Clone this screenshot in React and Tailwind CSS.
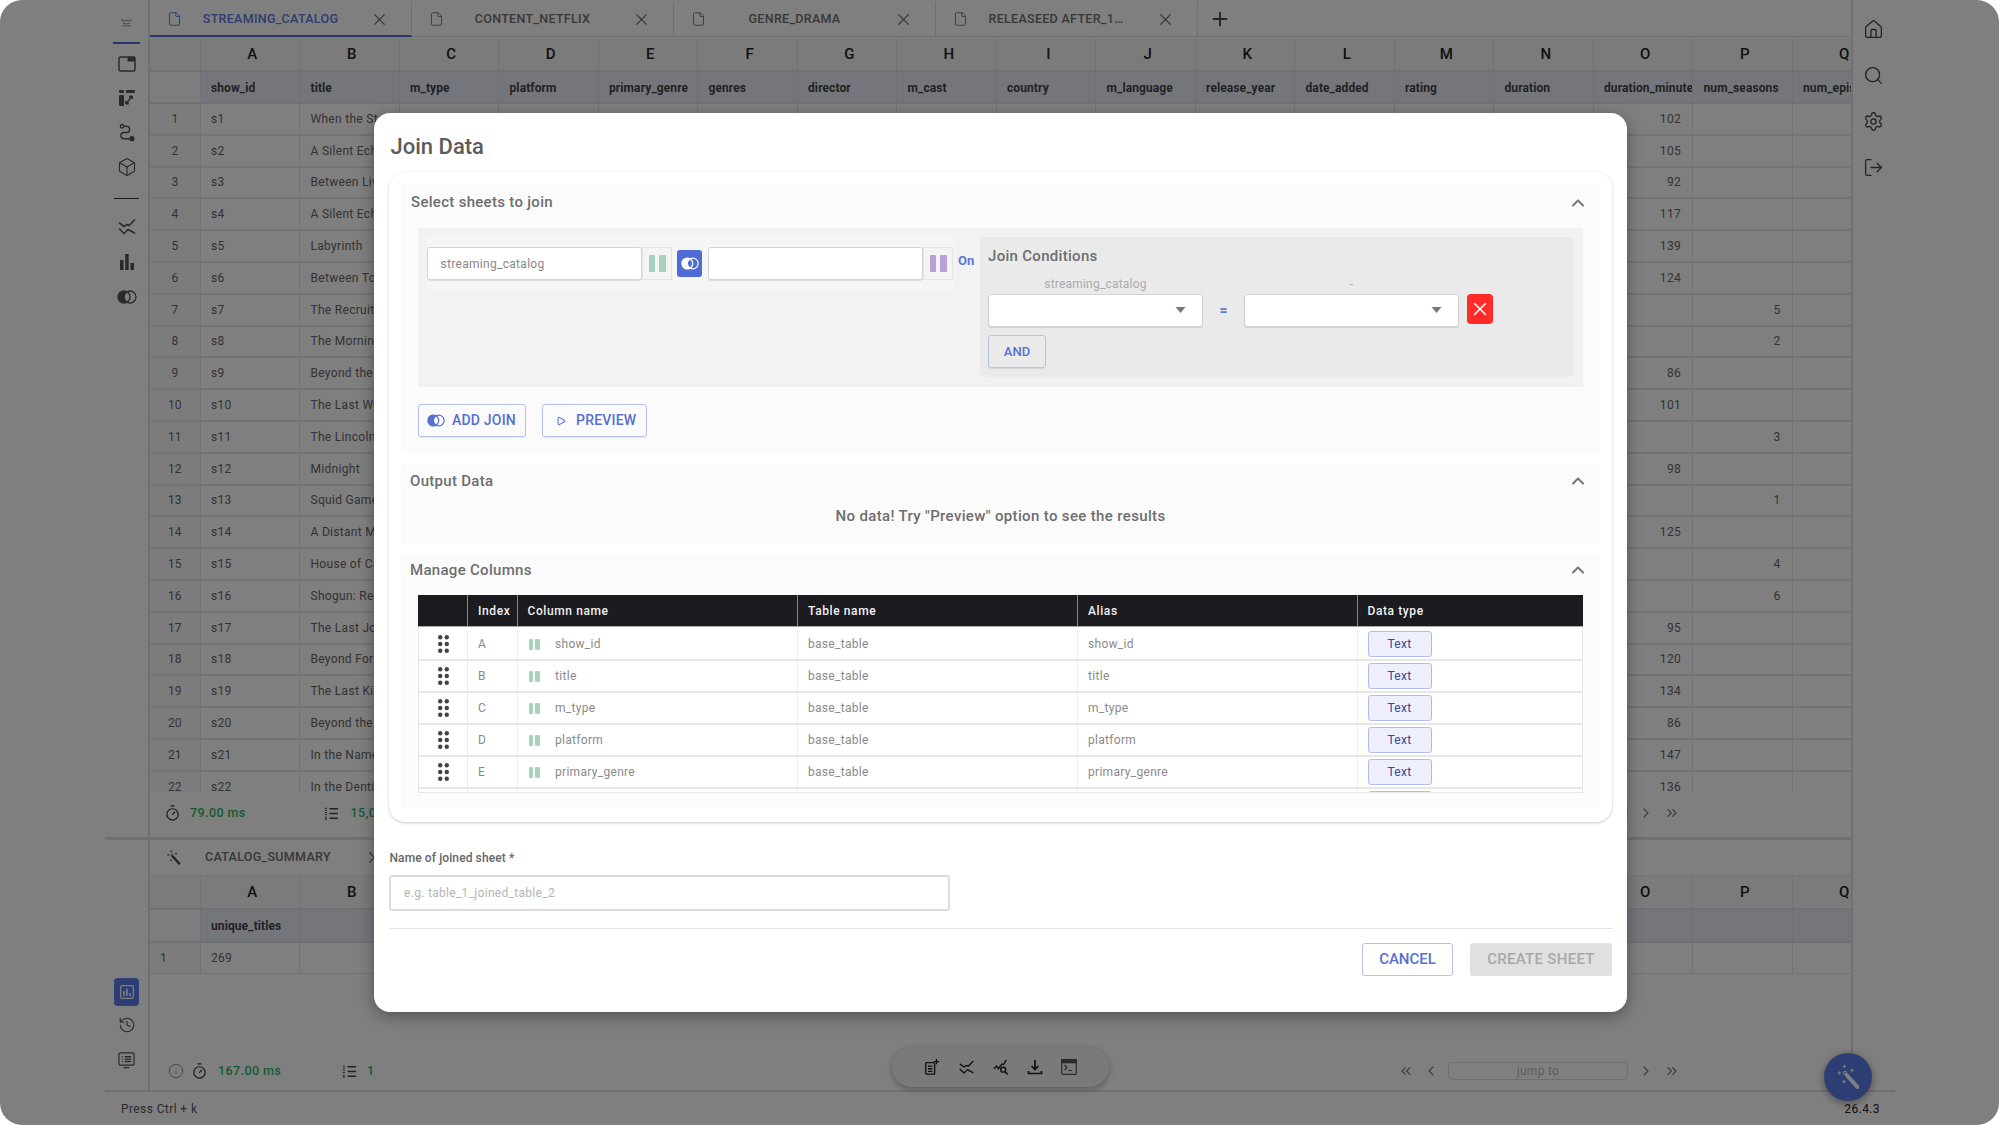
import React from "react";
import { File, X, Plus, Box, Timer, Info, History, House, Search, Settings, LogOut, ChevronUp, ChevronsLeft, ChevronsRight, ChevronLeft, ChevronRight, Play } from "lucide-react";

const LETTERS = "ABCDEFGHIJKLMNOPQ".split("");
const HEADERS = ["show_id","title","m_type","platform","primary_genre","genres","director","m_cast","country","m_language","release_year","date_added","rating","duration","duration_minutes","num_seasons","num_episodes"];
const ROWS = [
  ["When the Stars Fall","102",""],["A Silent Echo","105",""],["Between Lives","92",""],["A Silent Echo","117",""],["Labyrinth","139",""],["Between Tomorrow","124",""],
  ["The Recruit","","5"],["The Morning Show","","2"],["Beyond the Sea","86",""],["The Last Word","101",""],["The Lincoln Lawyer","","3"],["Midnight","98",""],
  ["Squid Game","","1"],["A Distant Memory","125",""],["House of Cards","","4"],["Shogun: Return","","6"],["The Last Journey","95",""],["Beyond Forever","120",""],
  ["The Last King","134",""],["Beyond the Line","86",""],["In the Name","147",""],["In the Dentist","136",""],
];
const MANAGE = [["A","show_id"],["B","title"],["C","m_type"],["D","platform"],["E","primary_genre"],["F","genres"]];

function Venn({ className = "" }) {
  return (
    <svg viewBox="0 0 20 14" className={className} fill="none" stroke="currentColor" strokeWidth="1.300">
      <path d="M10 1.800A6 6 0 1 0 10 12.200A6 6 0 0 1 10 1.800Z" fill="currentColor" />
      <path d="M10 1.800A6 6 0 0 1 10 12.200" />
      <circle cx="13" cy="7" r="6" />
    </svg>
  );
}
function Waves({ className = "" }) {
  return (
    <svg viewBox="0 0 20 20" className={className} fill="none" stroke="currentColor" strokeWidth="1.600" strokeLinejoin="round" strokeLinecap="round">
      <path d="M2.500 6L7 9.500l3-2 2 1L17.500 3" />
      <path d="M2.500 12L7 16.500l4-4 6.500 3.500" />
    </svg>
  );
}
function ListIcon({ className = "" }) {
  return (
    <svg viewBox="0 0 16 16" className={className} fill="none" stroke="currentColor" strokeWidth="1.500">
      <path d="M6 3h9M6 8h9M6 13h9" />
      <path d="M1 2.500h2M1 4.500h2M1 7h2M1 9h2M1 12h2M1 14h2" strokeWidth="1.100" />
    </svg>
  );
}
function Wand({ className = "" }) {
  return (
    <svg viewBox="0 0 24 24" className={className} fill="none" stroke="currentColor">
      <path d="M11 10.500L20 20.500" strokeWidth="3.400" strokeLinecap="round" />
      <circle cx="9.500" cy="8.500" r="1.300" strokeWidth="1" />
      <path d="M9 1.500v3M7.500 3h3M3 8.500h3M4.500 7v3M15.500 5v3M14 6.500h3M8.500 14.500v3M7 16h3" strokeWidth="0.900" />
    </svg>
  );
}
function Caret() {
  return (
    <svg viewBox="0 0 10 6" className="w-[11px] h-[6px] fill-[#777]">
      <polygon points="0,0 10,0 5,6" />
    </svg>
  );
}
function Bars({ className = "", bar = "" }) {
  return (
    <span className={`flex justify-between ${className}`}>
      <span className={`h-full w-[38%] rounded-[1px] ${bar}`} />
      <span className={`h-full w-[38%] rounded-[1px] ${bar}`} />
    </span>
  );
}
function Pager() {
  return (
    <div className="flex items-center text-[#777]">
      <ChevronsLeft className="w-[16px] h-[16px] mr-[9px]" strokeWidth={1.700} />
      <ChevronLeft className="w-[16px] h-[16px]" strokeWidth={1.700} />
      <div className="w-[180px] h-[18px] ml-[9px] mr-[10px] rounded-[5px] border border-[#dcdcdc] flex items-center justify-center text-[12px] tracking-[0.3px] text-[#bbb]">jump to</div>
      <ChevronRight className="w-[16px] h-[16px] mr-[10px]" strokeWidth={1.700} />
      <ChevronsRight className="w-[16px] h-[16px]" strokeWidth={1.700} />
    </div>
  );
}
function Tab({ name, active }) {
  return (
    <div className={`w-[262px] h-[35px] flex items-center border-r border-[#dedede] shrink-0 ${active ? "border-b-2 border-b-[#4f6bd6] pt-[2px]" : ""}`}>
      <File className={`w-[15px] h-[16px] ml-[17px] ${active ? "text-[#5a7ae0]" : "text-[#777]"}`} strokeWidth={1.500} />
      <span className={`ml-[20.500px] w-[136px] text-center text-[12.500px] font-medium tracking-[0.3px] truncate ${active ? "text-[#5a7ae0]" : "text-[#707070]"}`}>{name}</span>
      <X className="w-[19px] h-[19px] text-[#777] ml-[31px]" strokeWidth={1.500} />
    </div>
  );
}
function LetterRow() {
  return (
    <div className="flex h-[34px] bg-[#f7f7f7] border-b-2 border-[#e2e2e2] shrink-0">
      <div className="w-[50.500px] shrink-0 border-r border-[#e4e4e4]" />
      {LETTERS.map((l) => (
        <div key={l} className="w-[99.500px] shrink-0 border-r border-[#e4e4e4] flex items-center justify-center pl-[5px] text-[15px] font-medium text-[#222]">{l}</div>
      ))}
    </div>
  );
}
function Cell({ children, right }) {
  return (
    <div className={`w-[99.500px] shrink-0 h-full border-r border-[#e6e6e6] flex items-center overflow-hidden whitespace-nowrap text-[12px] tracking-[0.3px] text-[#666] ${right ? "justify-end pr-[11px]" : "pl-[10.500px]"}`}>{children}</div>
  );
}
function HeadCell({ children }) {
  return (
    <div className="w-[99.500px] shrink-0 h-full border-r border-[#e0e3ec] flex items-center overflow-hidden whitespace-nowrap pl-[10.500px] pt-[1.500px] text-[12px] font-bold tracking-[0.1px] text-[#444]">{children}</div>
  );
}

function SectionHead({ title, h }) {
  return (
    <div className={`flex items-center justify-between pr-[12px] ${h}`}>
      <span className="text-[15px] font-medium tracking-[0.3px] text-[#6e6e6e]">{title}</span>
      <ChevronUp className="w-[20px] h-[20px] text-[#777]" strokeWidth={2.400} />
    </div>
  );
}
function SheetInput({ value }) {
  return (
    <div className="w-[215px] h-[33px] bg-white rounded-[3px] border border-[#d4d4d4] shadow-[0_1px_1px_rgba(0,0,0,0.1)] flex items-center pl-[12.500px] text-[12px] tracking-[0.3px] text-[#888] shrink-0">{value}</div>
  );
}
function BarBox({ bar }) {
  return (
    <div className="w-[30px] h-[33px] border border-[#e4e4e4] bg-[#f4f4f4] flex items-center justify-center shrink-0">
      <Bars className="w-[17px] h-[17px]" bar={bar} />
    </div>
  );
}
function SelectBox() {
  return (
    <div className="w-[215px] h-[33px] bg-white rounded-[3px] border border-[#d4d4d4] shadow-[0_1px_1px_rgba(0,0,0,0.1)] flex items-center justify-end pr-[16px] shrink-0">
      <Caret />
    </div>
  );
}

function Modal() {
  return (
    <div className="absolute left-[374px] top-[113px] w-[1253px] h-[899px] bg-white rounded-[16px] shadow-[0_4px_16px_rgba(0,0,0,0.35)] px-[15px] pt-[21px] font-['Roboto',sans-serif]">
      <h2 className="h-[26px] leading-[26px] text-[22px] font-medium text-[#5c5c5c] pl-[1.500px]">Join Data</h2>

      <div className="mt-[12px] h-[650px] rounded-[16px] shadow-[0_1px_3px_rgba(0,0,0,0.22)] px-[12px] pt-[13px]">
        <div className="h-[268px] bg-[#fbfbfb]">
          <SectionHead title="Select sheets to join" h="h-[43px] pb-[8px] pl-[10px]" />
          <div className="mx-[17px] h-[159px] bg-[#f2f2f2] flex items-start pl-[8px] pt-[8px]">
            <div className="w-[528px] h-[55px] bg-[#f5f5f5] rounded-[6px] flex items-start pl-[1px] pt-[11px] shrink-0">
              <SheetInput value="streaming_catalog" />
              <BarBox bar="bg-[#a5d3bd]" />
              <div className="w-[25px] h-[27px] ml-[5px] mt-[3px] rounded-[3px] bg-[#4f6bd6] text-white flex items-center justify-center shrink-0">
                <Venn className="w-[18px] h-[13px]" />
              </div>
              <div className="ml-[6px]"><SheetInput value="" /></div>
              <BarBox bar="bg-[#b9a0d8]" />
            </div>
            <span className="ml-[4px] w-[22px] mt-[15px] text-[13px] font-bold text-[#5a78d8] shrink-0">On</span>
            <div className="w-[594px] h-[140px] mt-[1px] bg-[#eaeaea] rounded-[6px] pl-[8px] pt-[10px] shrink-0">
              <div className="h-[18px] leading-[18px] text-[15px] font-medium tracking-[0.3px] text-[#6e6e6e]">Join Conditions</div>
              <div className="flex mt-[10px] h-[18.500px] text-[12px] tracking-[0.2px] text-[#aaa]">
                <span className="w-[215px] text-center">streaming_catalog</span>
                <span className="w-[41px]" />
                <span className="w-[215px] text-center">-</span>
              </div>
              <div className="flex items-start">
                <SelectBox />
                <span className="w-[41px] h-[33px] flex items-center justify-center text-[14px] font-bold text-[#5a78d8]">=</span>
                <SelectBox />
                <div className="ml-[8px] w-[26px] h-[30px] rounded-[4px] bg-[#ff2a2a] flex items-center justify-center text-white">
                  <X className="w-[22px] h-[22px]" strokeWidth={1.600} />
                </div>
              </div>
              <button className="mt-[8.500px] w-[58px] h-[33px] rounded-[3px] border border-[#b4c3ec] shadow-[0_1px_1px_rgba(0,0,0,0.08)] text-[13px] font-medium text-[#5570d2]">AND</button>
            </div>
          </div>
          <div className="flex gap-[16px] mx-[17px] mt-[17px]">
            <button className="w-[108px] h-[33px] rounded-[3px] border border-[#b4c3ec] shadow-[0_1px_1px_rgba(0,0,0,0.08)] flex items-center pl-[8px] text-[14px] font-medium tracking-[0.2px] text-[#5570d2]">
              <Venn className="w-[18px] h-[13px]" />
              <span className="ml-[7px]">ADD JOIN</span>
            </button>
            <button className="w-[105px] h-[33px] rounded-[3px] border border-[#b4c3ec] shadow-[0_1px_1px_rgba(0,0,0,0.08)] flex items-center pl-[13px] text-[14px] font-medium tracking-[0.2px] text-[#5570d2]">
              <Play className="w-[10px] h-[10px]" strokeWidth={2.500} />
              <span className="ml-[10px]">PREVIEW</span>
            </button>
          </div>
        </div>

        <div className="mt-[12px] h-[78px] bg-[#fbfbfb]">
          <SectionHead title="Output Data" h="h-[32px] pl-[9px]" />
          <div className="h-[38px] flex items-center justify-center text-[15px] font-medium tracking-[0.35px] text-[#6e6e6e]">No data! Try "Preview" option to see the results</div>
        </div>

        <div className="mt-[11px] h-[254px] bg-[#fbfbfb]">
          <SectionHead title="Manage Columns" h="h-[41px] pb-[9px] pl-[9px]" />
          <div className="mx-[17px] h-[198px] overflow-hidden border-b border-[#e6e6e6]">
            <div className="flex h-[32px] bg-[#1b1b20] text-[12px] font-medium tracking-[0.6px] text-[#f0f0f0] border-b border-[#aaa]">
              <div className="w-[50px] border-r border-[#888]" />
              <div className="w-[49.500px] pl-[10px] flex items-center border-r border-[#888]">Index</div>
              <div className="w-[280.500px] pl-[10px] flex items-center border-r border-[#888]">Column name</div>
              <div className="w-[280px] pl-[10px] flex items-center border-r border-[#888]">Table name</div>
              <div className="w-[279.500px] pl-[10px] flex items-center border-r border-[#888]">Alias</div>
              <div className="w-[224px] pl-[10px] flex items-center">Data type</div>
            </div>
            <div className="h-[2.500px] bg-white border-x border-[#e6e6e6]" />
            {MANAGE.map(([idx, name]) => (
              <div key={idx} className="flex h-[31.900px] bg-white border-b-2 border-x border-[#e6e6e6] text-[12px] tracking-[0.3px] text-[#8a8a8a]">
                <div className="w-[49px] flex items-center justify-center border-r border-[#ececec]">
                  <svg viewBox="0 0 11 18" className="w-[11px] h-[18px] fill-[#444]">
                    {[2.200, 8.800].map((cx) => [2.300, 9, 15.700].map((cy) => <circle key={`${cx}-${cy}`} cx={cx} cy={cy} r="2.200" />))}
                  </svg>
                </div>
                <div className="w-[49.500px] pl-[10px] flex items-center border-r border-[#ececec]">{idx}</div>
                <div className="w-[280.500px] pl-[11px] flex items-center border-r border-[#ececec]">
                  <Bars className="w-[11px] h-[11px]" bar="bg-[#a5d3bd]" />
                  <span className="ml-[15.500px]">{name}</span>
                </div>
                <div className="w-[280px] pl-[10px] flex items-center border-r border-[#ececec]">base_table</div>
                <div className="w-[279.500px] pl-[10px] flex items-center border-r border-[#ececec]">{name}</div>
                <div className="w-[222px] pl-[10px] flex items-center">
                  <div className="w-[64px] h-[26px] rounded-[3px] bg-[#eef0fd] border border-[#b0bcf0] flex items-center justify-center text-[#34488c]">Text</div>
                </div>
              </div>
            ))}
          </div>
        </div>
      </div>

      <div className="mt-[28px] h-[16px] leading-[16px] pl-[0.500px] text-[12px] font-medium tracking-[0.1px] text-[#666]">Name of joined sheet *</div>
      <div className="mt-[9px] w-[561px] h-[36px] rounded-[3px] border-2 border-[#dcdcdc] flex items-center pl-[13px] text-[12px] tracking-[0.3px] text-[#b4b4b4]">e.g. table_1_joined_table_2</div>
      <div className="mt-[17px] h-[1px] bg-[#e4e4e4]" />
      <div className="mt-[13.500px] flex justify-end gap-[17px]">
        <button className="w-[91px] h-[33px] rounded-[3px] border border-[#b4c3ec] text-[15px] font-medium text-[#5570d2]">CANCEL</button>
        <button className="w-[142px] h-[33px] rounded-[3px] bg-[#e0e0e0] text-[15px] font-medium tracking-[0.3px] text-[#a8a8a8]">CREATE SHEET</button>
      </div>
    </div>
  );
}

function RailIcon({ children, className = "" }) {
  return <div className={`h-[20px] flex items-center justify-center text-[#555] ${className}`}>{children}</div>;
}

export default function App() {
  return (
    <div className="relative w-[1999px] h-[1125px] overflow-hidden bg-white font-['Roboto',sans-serif]">
      <div className="h-full pl-[105px] pr-[104px] flex flex-col">
        <div className="h-[1092px] flex border-b-2 border-[#e0e0e0] shrink-0">
          {/* left rail */}
          <div className="w-[45px] shrink-0 border-r-2 border-[#e0e0e0] flex flex-col">
            <div className="h-[840px] border-b-[3px] border-[#e0e0e0] flex flex-col">
              <div className="mt-[16px] h-[14px] flex items-center justify-center">
                <svg viewBox="0 0 14 10" className="w-[13px] h-[10px]" fill="none" stroke="#9aa5c4" strokeWidth="1.200">
                  <path d="M1 1l3 2 3-1 3 1 3-2M3 5l4 1 4-1M2 8h10" />
                </svg>
              </div>
              <div className="mt-[12px] mx-[8px] h-[1.500px] bg-[#4f6bd6]" />
              <RailIcon className="mt-[10px]">
                <svg viewBox="0 0 18 16" className="w-[18px] h-[16px]" fill="none" stroke="currentColor" strokeWidth="1.500">
                  <rect x="1" y="1" width="16" height="14" rx="1.500" />
                  <rect x="9.500" y="1" width="7.500" height="4.500" fill="currentColor" stroke="none" />
                </svg>
              </RailIcon>
              <RailIcon className="mt-[14px]">
                <svg viewBox="0 0 18 18" className="w-[18px] h-[18px]" fill="currentColor">
                  <rect x="1" y="1" width="5" height="3" rx="1" />
                  <rect x="8" y="1" width="9" height="3" rx="1" />
                  <rect x="1" y="6" width="5" height="11" rx="1" />
                  <path d="M14 7l-6 8M14 7l-3 .5M14 7l.5 3M8 15l3-.5M8 15l-.5-3" fill="none" stroke="currentColor" strokeWidth="1.500" />
                </svg>
              </RailIcon>
              <RailIcon className="mt-[15px]">
                <svg viewBox="0 0 18 20" className="w-[16px] h-[19px]" fill="none" stroke="currentColor" strokeWidth="1.500">
                  <circle cx="3.500" cy="3" r="2" />
                  <path d="M5.500 3h3a3.500 3.500 0 0 1 0 7h-3a3.500 3.500 0 0 0 0 7h6" />
                  <circle cx="14.500" cy="17" r="2.200" fill="currentColor" />
                </svg>
              </RailIcon>
              <RailIcon className="mt-[14px]"><Box className="w-[20px] h-[20px]" strokeWidth={1.400} /></RailIcon>
              <div className="mt-[21px] mx-[9px] h-[1.500px] bg-[#333]" />
              <RailIcon className="mt-[18px]"><Waves className="w-[20px] h-[20px]" /></RailIcon>
              <RailIcon className="mt-[15px]">
                <svg viewBox="0 0 14 16" className="w-[14px] h-[16px]" fill="currentColor">
                  <rect x="0" y="6" width="3.500" height="10" />
                  <rect x="5.200" y="0" width="3.500" height="16" />
                  <rect x="10.500" y="9" width="3.500" height="7" />
                </svg>
              </RailIcon>
              <RailIcon className="mt-[15px]"><Venn className="w-[20px] h-[14px]" /></RailIcon>
            </div>
            <div className="flex-1 flex flex-col items-center justify-end pb-[20px]">
              <div className="w-[25px] h-[28px] rounded-[4px] bg-[#5a7ce8] flex items-center justify-center text-white">
                <svg viewBox="0 0 14 14" className="w-[14px] h-[14px]" fill="none" stroke="currentColor" strokeWidth="1.200">
                  <rect x="0.700" y="0.700" width="12.600" height="12.600" rx="1" />
                  <path d="M4 11V6M7 11V3.500M10 11V8" strokeWidth="1.600" />
                </svg>
              </div>
              <RailIcon className="mt-[9px]"><History className="w-[18px] h-[18px]" strokeWidth={1.500} /></RailIcon>
              <RailIcon className="mt-[15px]">
                <svg viewBox="0 0 18 18" className="w-[17px] h-[17px]" fill="none" stroke="currentColor" strokeWidth="1.300">
                  <rect x="1" y="1" width="16" height="13" rx="1.500" />
                  <path d="M4 5h1M4 7.500h1M4 10h1M7 5h7M7 7.500h7M7 10h7M6 16.500h6" strokeWidth="1.500" />
                </svg>
              </RailIcon>
            </div>
          </div>

          {/* center */}
          <div className="w-[1701px] shrink-0 flex flex-col">
            <div className="h-[840px] border-b-[3px] border-[#e0e0e0] flex flex-col overflow-hidden">
              <div className="mt-[2px] h-[35px] flex items-center shrink-0 border-b border-[#e0e0e0]">
                <Tab name="STREAMING_CATALOG" active />
                <Tab name="CONTENT_NETFLIX" />
                <Tab name="GENRE_DRAMA" />
                <Tab name="RELEASEED AFTER_1..." />
                <Plus className="w-[22px] h-[22px] ml-[11px] text-[#444]" strokeWidth={2} />
              </div>
              <div className="h-[755px] overflow-hidden shrink-0 pt-[1px]">
                <LetterRow />
                <div className="flex h-[32px] bg-[#e9edf9] border-b-2 border-[#dfe2ea]">
                  <div className="w-[50.500px] shrink-0 bg-[#fafafa] border-r border-[#e4e4e4]" />
                  {HEADERS.map((h) => <HeadCell key={h}>{h}</HeadCell>)}
                </div>
                {ROWS.map((r, i) => (
                  <div key={i} className="flex h-[31.800px] border-b-2 border-[#e6e6e6]">
                    <div className="w-[50.500px] shrink-0 bg-[#f9f9f9] border-r border-[#e4e4e4] flex items-center justify-center text-[12px] text-[#666]">{i + 1}</div>
                    <Cell>{`s${i + 1}`}</Cell>
                    <Cell>{r[0]}</Cell>
                    {Array.from({ length: 12 }).map((_, k) => <Cell key={k} />)}
                    <Cell right>{r[1]}</Cell>
                    <Cell right>{r[2]}</Cell>
                    <Cell />
                  </div>
                ))}
              </div>
              <div className="flex-1 flex items-center pl-[14px] pr-[171px] pb-[3px]">
                <Timer className="w-[17px] h-[18px] text-[#333]" strokeWidth={1.700} />
                <span className="ml-[9px] w-[133.500px] text-[12.500px] font-medium tracking-[0.4px] text-[#28b85c]">79.00 ms</span>
                <ListIcon className="w-[15px] h-[15px] text-[#444]" />
                <span className="ml-[12px] text-[12.500px] font-medium tracking-[0.4px] text-[#28b85c]">15,000</span>
                <div className="ml-auto"><Pager /></div>
              </div>
            </div>

            <div className="flex-1 flex flex-col overflow-hidden">
              <div className="h-[36px] flex items-center shrink-0 border-b border-[#e8e8e8]">
                <div className="w-[262px] flex items-center">
                  <Wand className="w-[17px] h-[17px] ml-[15px] text-[#444]" />
                  <span className="ml-[23px] w-[132px] text-[12.500px] font-medium tracking-[0.3px] text-[#707070]">CATALOG_SUMMARY</span>
                  <X className="w-[19px] h-[19px] text-[#777] ml-[28px]" strokeWidth={1.500} />
                </div>
              </div>
              <LetterRow />
              <div className="flex h-[33px] bg-[#e9edf9] border-b-2 border-[#dfe2ea] shrink-0">
                <div className="w-[50.500px] shrink-0 bg-[#fafafa] border-r border-[#e4e4e4]" />
                <HeadCell>unique_titles</HeadCell>
                {Array.from({ length: 16 }).map((_, k) => <HeadCell key={k} />)}
              </div>
              <div className="flex h-[31px] border-b border-[#e4e4e4] shrink-0">
                <div className="w-[50.500px] shrink-0 bg-[#f9f9f9] border-r border-[#e4e4e4] flex items-center pl-[10px] text-[12px] text-[#666]">1</div>
                <Cell>269</Cell>
                {Array.from({ length: 16 }).map((_, k) => <Cell key={k} />)}
              </div>
              <div className="mt-auto h-[38px] flex items-center pl-[18px] pr-[171px] shrink-0">
                <Info className="w-[16px] h-[16px] text-[#888]" strokeWidth={1.400} />
                <Timer className="w-[17px] h-[18px] ml-[7px] text-[#333]" strokeWidth={1.700} />
                <span className="ml-[10px] w-[124px] text-[12.500px] font-medium tracking-[0.4px] text-[#28b85c]">167.00 ms</span>
                <ListIcon className="w-[15px] h-[15px] text-[#444]" />
                <span className="ml-[10px] text-[12.500px] font-medium text-[#28b85c]">1</span>
                <div className="ml-auto"><Pager /></div>
              </div>
            </div>
          </div>

          {/* right rail */}
          <div className="flex-1 border-l-2 border-[#e0e0e0] flex flex-col items-center pt-[19px] pr-[2px] gap-[25px] text-[#444]">
            <House className="w-[21px] h-[21px]" strokeWidth={1.500} />
            <Search className="w-[21px] h-[21px]" strokeWidth={1.500} />
            <Settings className="w-[21px] h-[21px]" strokeWidth={1.500} />
            <LogOut className="w-[21px] h-[21px]" strokeWidth={1.500} />
          </div>
        </div>
        <div className="flex-1 flex items-center justify-between pl-[16px] pr-[15px] text-[12px] tracking-[0.4px] text-[#555]">
          <span>Press Ctrl + k</span>
          <span className="text-[#222]">26.4.3</span>
        </div>
      </div>

      {/* floating toolbar */}
      <div className="absolute left-[892px] top-[1047px] w-[217px] h-[40px] rounded-[20px] bg-[#f5f5f5] shadow-[0_2px_6px_rgba(0,0,0,0.3)] flex items-center justify-center gap-[18px] pr-[1px] text-[#222]">
        <svg viewBox="0 0 16 18" className="w-[16px] h-[16px]" fill="none" stroke="currentColor" strokeWidth="1.500">
          <rect x="1" y="4" width="10" height="13" rx="1" />
          <path d="M3.500 8h5M3.500 11h5M3.500 14h5" />
          <path d="M13 0v6M10 3h6" />
        </svg>
        <Waves className="w-[17px] h-[17px]" />
        <svg viewBox="0 0 18 18" className="w-[16px] h-[16px]" fill="none" stroke="currentColor" strokeWidth="1.600">
          <path d="M1 11l3-3 2 3 4-5 2 0 3-5" />
          <circle cx="11.500" cy="12" r="2.800" />
          <path d="M13.500 14l3 3.500" />
        </svg>
        <svg viewBox="0 0 16 16" className="w-[16px] h-[16px]" fill="none" stroke="currentColor" strokeWidth="1.700">
          <path d="M8 1v9M4.500 7L8 10.500 11.500 7" />
          <path d="M1.500 12v2.500h13V12" />
        </svg>
        <svg viewBox="0 0 16 16" className="w-[16px] h-[16px] text-[#555]" fill="none" stroke="currentColor" strokeWidth="1.200">
          <rect x="0.700" y="0.700" width="14.600" height="14.600" rx="1" />
          <rect x="0.700" y="0.700" width="14.600" height="3" fill="currentColor" />
          <path d="M3.500 6l2.500 2.500L3.500 11M7.500 11.500h3.500" />
        </svg>
      </div>

      {/* assistant button */}
      <div className="absolute left-[1824px] top-[1053px] w-[48px] h-[48px] rounded-full bg-[#5a7ce8] shadow-[0_2px_8px_rgba(0,0,0,0.4)] z-10 flex items-center justify-center text-white">
        <Wand className="w-[28px] h-[28px]" />
      </div>

      {/* backdrop */}
      <div className="absolute inset-0 rounded-[22px] bg-black/50 z-20" />
      <div className="absolute inset-0 z-30 pointer-events-none">
        <Modal />
      </div>
    </div>
  );
}
